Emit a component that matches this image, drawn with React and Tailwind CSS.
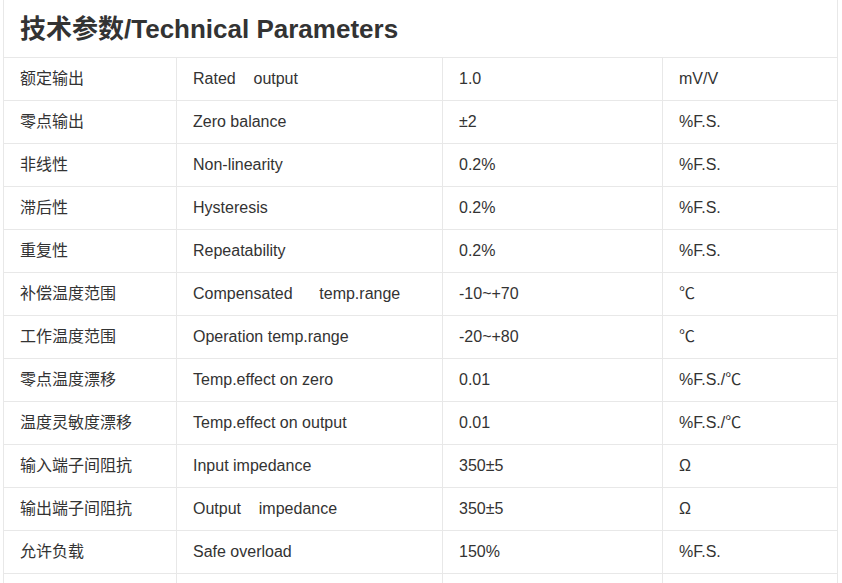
import React from 'react';

const rows = [
  ['额定输出', 'Rated    output', '1.0', 'mV/V'],
  ['零点输出', 'Zero balance', '±2', '%F.S.'],
  ['非线性', 'Non-linearity', '0.2%', '%F.S.'],
  ['滞后性', 'Hysteresis', '0.2%', '%F.S.'],
  ['重复性', 'Repeatability', '0.2%', '%F.S.'],
  ['补偿温度范围', 'Compensated      temp.range', '-10~+70', '℃'],
  ['工作温度范围', 'Operation temp.range', '-20~+80', '℃'],
  ['零点温度漂移', 'Temp.effect on zero', '0.01', '%F.S./℃'],
  ['温度灵敏度漂移', 'Temp.effect on output', '0.01', '%F.S./℃'],
  ['输入端子间阻抗', 'Input impedance', '350±5', 'Ω'],
  ['输出端子间阻抗', 'Output    impedance', '350±5', 'Ω'],
  ['允许负载', 'Safe overload', '150%', '%F.S.'],
  ['', '', '', ''],
];

const App = () => {
  return (
    <div className="bg-white h-screen overflow-hidden" style={{ fontFamily: '"Liberation Sans", Arial, "Noto Sans CJK SC", sans-serif' }}>
      <div className="ml-[3px] w-[835px] border-x border-[#e8e8e8] text-[#333]">
        <div className="h-[57px] flex items-center pl-[16px]">
          <h2 className="text-[26px] font-bold text-[#333] leading-none">技术参数/Technical Parameters</h2>
        </div>
        {rows.map((row, i) => (
          <div key={i} className="grid grid-cols-[172px_266px_220px_175px] h-[43px] border-t border-[#e8e8e8] text-[16px]">
            {row.map((cell, j) => (
              <div
                key={j}
                className={`flex items-center whitespace-pre ${j === 0 ? 'pl-[16px]' : 'pl-[16px] border-l border-[#e8e8e8]'}`}
              >
                {cell}
              </div>
            ))}
          </div>
        ))}
      </div>
    </div>
  );
};

export default App;
